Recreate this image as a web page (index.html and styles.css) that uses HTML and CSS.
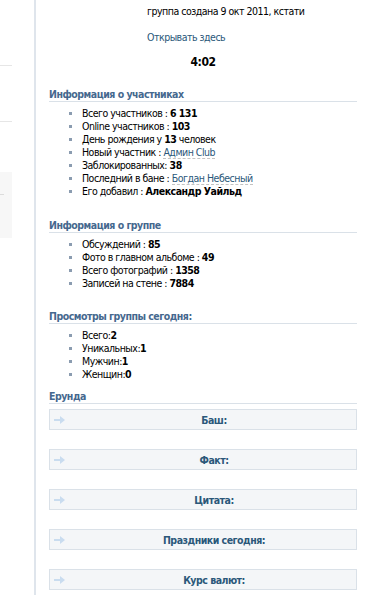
FILE: index.html
```html
<!DOCTYPE html>
<html lang="ru">
<head>
<meta charset="utf-8">
<link rel="stylesheet" href="styles.css">
</head>
<body>
<div class="page">
  <aside class="side">
    <div class="side-line l1"></div>
    <div class="side-line l2"></div>
    <div class="side-box"><div class="side-box-line"></div></div>
  </aside>
  <main class="main">
    <div class="top">
      <p class="created">группа создана 9 окт 2011, кстати</p>
      <p class="open"><a href="#">Открывать здесь</a></p>
      <p class="time">4:02</p>
    </div>

    <section class="sec sec1">
      <h2 class="hdr">Информация о участниках</h2>
      <ul class="list">
        <li>Всего участников : <b>6 131</b></li>
        <li>Online участников : <b>103</b></li>
        <li>День рождения у <b>13</b> человек</li>
        <li>Новый участник : <a class="dash" href="#">Админ Club</a></li>
        <li>Заблокированных: <b>38</b></li>
        <li>Последний в бане : <a class="dash" href="#">Богдан Небесный</a></li>
        <li>Его добавил : <b>Александр Уайльд</b></li>
      </ul>
    </section>

    <section class="sec sec2">
      <h2 class="hdr">Информация о группе</h2>
      <ul class="list">
        <li>Обсуждений : <b>85</b></li>
        <li>Фото в главном альбоме : <b>49</b></li>
        <li>Всего фотографий : <b>1358</b></li>
        <li>Записей на стене : <b>7884</b></li>
      </ul>
    </section>

    <section class="sec sec3">
      <h2 class="hdr">Просмотры группы сегодня:</h2>
      <ul class="list">
        <li>Всего:<b>2</b></li>
        <li>Уникальных:<b>1</b></li>
        <li>Мужчин:<b>1</b></li>
        <li>Женщин:<b>0</b></li>
      </ul>
    </section>

    <section class="sec sec4">
      <h2 class="hdr">Ерунда</h2>
      <div class="boxes">
        <div class="box"><svg class="arr" width="12" height="8" viewBox="0 0 12 8"><path d="M0 3h6V0l5 4-5 4V5H0z" fill="#c9dcef"/></svg><span>Баш:</span></div>
        <div class="box"><svg class="arr" width="12" height="8" viewBox="0 0 12 8"><path d="M0 3h6V0l5 4-5 4V5H0z" fill="#c9dcef"/></svg><span>Факт:</span></div>
        <div class="box"><svg class="arr" width="12" height="8" viewBox="0 0 12 8"><path d="M0 3h6V0l5 4-5 4V5H0z" fill="#c9dcef"/></svg><span>Цитата:</span></div>
        <div class="box"><svg class="arr" width="12" height="8" viewBox="0 0 12 8"><path d="M0 3h6V0l5 4-5 4V5H0z" fill="#c9dcef"/></svg><span>Праздники сегодня:</span></div>
        <div class="box"><svg class="arr" width="12" height="8" viewBox="0 0 12 8"><path d="M0 3h6V0l5 4-5 4V5H0z" fill="#c9dcef"/></svg><span>Курс валют:</span></div>
      </div>
    </section>
  </main>
</div>
</body>
</html>
```
FILE: styles.css
```css
* { box-sizing: border-box; }
html, body { margin: 0; padding: 0; background: #fff; }
body {
  font-family: "DejaVu Sans Condensed", "DejaVu Sans", sans-serif;
  font-size: 10.5px;
  letter-spacing: -0.5px;
  color: #000;
  overflow: hidden;
  height: 595px;
}
a { color: #2b587a; text-decoration: none; }
b { font-weight: bold; }
.page { display: flex; height: 595px; }
.side { width: 34px; flex: none; display: flex; flex-direction: column; }
.side-line { width: 12px; height: 1px; background: #e6e6e6; }
.l1 { margin-top: 65px; }
.l2 { margin-top: 55px; }
.side-box { width: 12px; height: 66px; margin-top: 50px; background: #f7f7f7; padding-top: 22px; }
.side-box-line { width: 4px; height: 1px; background: #dcdcdc; }
.main {
  width: 323px;
  border-left: 2px solid #dfe5ec;
  padding-left: 13px;
}
.top p { margin: 0; line-height: 14px; }
.created { padding-left: 98px; padding-top: 4px; }
.open { padding-left: 98px; margin-top: 12px !important; }
.time { text-align: center; width: 308px; font-weight: bold; font-size: 12px; margin-top: 11px !important; }
.sec { width: 308px; }
.hdr {
  margin: 0;
  font-size: 10.5px;
  font-weight: bold;
  color: #45688e;
  line-height: 13px;
  height: 14px;
  border-bottom: 1px solid #dae1e8;
}
.sec1 { margin-top: 19px; }
.sec2 { margin-top: 21px; }
.sec3 { margin-top: 20px; }
.sec4 { margin-top: 9px; }
.list { list-style: none; margin: 5px 0 0; padding: 0 0 0 20px; }
.list li { line-height: 13px; height: 13px; position: relative; padding-left: 13px; white-space: nowrap; }
.list li::before {
  content: "";
  position: absolute;
  left: 0;
  top: 5px;
  width: 3px;
  height: 3px;
  background: #8b9cb0;
}
.dash { border-bottom: 1px dashed #c3c3c3; }
.boxes { display: flex; flex-direction: column; gap: 19px; margin-top: 5px; }
.box {
  height: 21px;
  background: #f4f6f8;
  border: 1px solid #dae1e8;
  display: flex;
  align-items: center;
  position: relative;
  justify-content: center;
  padding-left: 22px;
  font-weight: bold;
  color: #2b587a;
}
.arr { position: absolute; left: 4px; top: 6px; }
```
